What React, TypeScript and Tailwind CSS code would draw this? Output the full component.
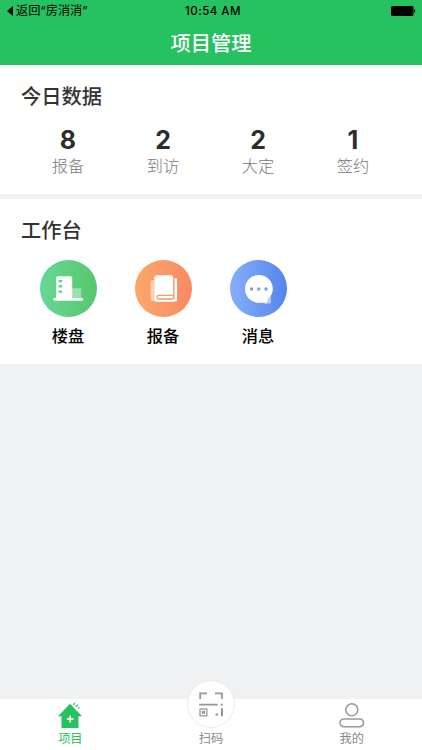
import type { ReactNode } from "react"

type Stat = {
  label: string
  value: number
}

type Tool = {
  label: string
  color: string
  icon: ReactNode
}

const stats: Stat[] = [
  { label: "报备", value: 8 },
  { label: "到访", value: 2 },
  { label: "大定", value: 2 },
  { label: "签约", value: 1 },
]

const BuildingIcon = () => (
  <svg viewBox="0 0 57 57" className="size-full">
    <rect x="32" y="28.2" width="9.2" height="10" rx="1.2" fill="#fff" fillOpacity="0.4" />
    <path d="M16.2 38V18q0-1.7 1.7-1.7h12.6q1.7 0 1.7 1.7v20z" fill="#fff" />
    <rect x="13.3" y="38" width="30" height="2.8" rx="1.4" fill="#fff" />
    <path d="M18.6 21.2h3.6M18.6 26.4h3.6M18.6 31.6h3.6" stroke="#5fcf83" strokeWidth="2.2" />
  </svg>
)

const BookIcon = () => (
  <svg viewBox="0 0 57 57" className="size-full">
    <path d="M15.7 22q0-1.8 1.8-1.8h2v21h-2q-1.8 0-1.8-1.8z" fill="#fff" fillOpacity="0.5" />
    <rect x="19.4" y="15.2" width="18.8" height="26.6" rx="2.6" fill="#fff" />
    <path
      d="M40.700 18.600v21.700H23.500q-3 0-3-2.700"
      fill="none"
      stroke="#fff"
      strokeWidth="2.6"
      strokeLinejoin="round"
    />
    <rect
      x="22"
      y="35.4"
      width="17"
      height="3.6"
      rx="1.8"
      fill="none"
      stroke="#fa9969"
      strokeWidth="1.3"
    />
    <path d="M38.700 18v17" stroke="#fa9969" strokeWidth="0.9" />
  </svg>
)

const MessageIcon = () => (
  <svg viewBox="0 0 57 57" className="size-full">
    <path d="M41 36v6.3q0 1.4-1.4 1.4H33z" fill="#fff" fillOpacity="0.5" />
    <path
      d="M28.9 15a13.9 13.9 0 0 1 13.9 13.9c0 4-1.6 7-4.300 9.300l-1.600 4.600h-8a13.900 13.900 0 0 1 0-27.800z"
      fill="#fff"
    />
    <g fill="#6f9af5">
      <circle cx="21.5" cy="29" r="1.7" />
      <circle cx="28.8" cy="29" r="1.7" />
      <circle cx="36" cy="29" r="1.7" />
    </g>
  </svg>
)

const tools: Tool[] = [
  { label: "楼盘", color: "from-[#65d896] to-[#58c66c]", icon: <BuildingIcon /> },
  { label: "报备", color: "from-[#faa869] to-[#fa8964]", icon: <BookIcon /> },
  { label: "消息", color: "from-[#86aef9] to-[#5585ed]", icon: <MessageIcon /> },
]

const HomeIcon = () => (
  <svg viewBox="0 0 28 28" className="size-7">
    <path d="M14 2.700L26 15.200h-3.500V27H5.500V15.200H2z" fill="#26c160" />
    <path d="M14.200 14.800v6.600M10.900 18.100h6.600" stroke="#fff" strokeWidth="1.6" />
    <path
      d="M17.800 3.400l.6-1M20.200 5.600l1.200-1.300M22.300 7l.8-.3"
      stroke="#26c160"
      strokeWidth="1.3"
      strokeLinecap="round"
    />
  </svg>
)

const ScanIcon = () => (
  <svg viewBox="0 0 26 26" className="size-[26px]" fill="none" stroke="#969696" strokeWidth="1.8">
    <path d="M2.2 8V2.3H9M17 2.3h7V8M1.200 13.600h18.500M22.800 13.600h2.200" />
    <rect x="2" y="18" width="6.800" height="6.800" strokeWidth="1.3" />
    <rect x="4.400" y="20.400" width="2" height="2" strokeWidth="1.2" />
    <path d="M24 17.300v7.900M17.500 23.500h2.600" strokeWidth="2" />
  </svg>
)

const UserIcon = () => (
  <svg viewBox="0 0 28 28" className="size-7" fill="none" stroke="#999" strokeWidth="1.6">
    <circle cx="13.8" cy="8.800" r="6" />
    <rect x="2" y="18" width="23.500" height="7.700" rx="3.850" />
  </svg>
)

const StatusBar = () => (
  <div className="grid h-[22px] grid-cols-[1fr_auto_1fr] items-center pl-[7px] pr-[6px] text-[12px] leading-none text-black">
    <div className="flex items-center gap-[2px]">
      <svg viewBox="0 0 7 10" className="h-[10px] w-[7px]">
        <path d="M6 0v10L0 5z" />
      </svg>
      <span className="font-['Inter','Noto_Sans_CJK_SC',sans-serif] text-[12.2px]">
        返回“房消消”
      </span>
    </div>
    <span className="pl-[3px] pt-[2px] font-['Inter'] text-[11.5px] font-medium tracking-[0.5px]">
      10:54 AM
    </span>
    <svg viewBox="0 0 25 10" className="h-[10px] w-[25px] justify-self-end">
      <rect width="22.5" height="10" rx="1.5" />
      <path d="M23.3 3.5q1.3 1.5 0 3z" stroke="#000" strokeWidth="0.6" />
    </svg>
  </div>
)

export default function App() {
  return (
    <div className="flex h-[750px] w-[422px] flex-col overflow-hidden bg-[#f0f1f3] font-['Noto_Sans_CJK_SC',sans-serif]">
      <header className="h-[65px] shrink-0 bg-[#26c160]">
        <StatusBar />
        <h1 className="text-center text-[20.25px] font-medium leading-[42px] text-white">
          项目管理
        </h1>
      </header>

      <main className="flex-1">
        <section className="h-[129px] bg-white pt-4">
          <h2 className="pl-[21px] text-[20.25px] font-medium leading-[30px] text-[#333]">
            今日数据
          </h2>
          <div className="grid grid-cols-[repeat(4,95px)] pl-[20.5px] pt-4 text-center">
            {stats.map(stat => (
              <div key={stat.label}>
                <p className="font-['Inter'] text-[25px] font-bold leading-[27px] text-[#2d2d2d]">
                  {stat.value}
                </p>
                <p className="-mt-px text-[16.2px] font-light leading-6 text-[#777]">
                  {stat.label}
                </p>
              </div>
            ))}
          </div>
        </section>

        <section className="mt-[5px] h-[165px] bg-white pt-4">
          <h2 className="pl-[21px] text-[20.25px] font-medium leading-[30px] text-[#333]">
            工作台
          </h2>
          <div className="grid grid-cols-[repeat(4,95px)] pl-[20.5px] pt-[15px]">
            {tools.map(tool => (
              <div key={tool.label} className="flex flex-col items-center">
                <div className={`size-[57px] rounded-full bg-linear-to-r ${tool.color}`}>
                  {tool.icon}
                </div>
                <p className="mt-1.5 text-[16.2px] font-medium leading-6 text-black">
                  {tool.label}
                </p>
              </div>
            ))}
          </div>
        </section>
      </main>

      <nav className="grid h-[51px] shrink-0 grid-cols-3 bg-white text-[12.2px] leading-[18px] text-[#888]">
        <div className="flex flex-col items-center pt-[2px] text-[#26c160]">
          <HomeIcon />
          <span>项目</span>
        </div>
        <div className="flex flex-col items-center">
          <div className="-mt-[19px] flex size-12 items-center justify-center rounded-full border border-[#ececec] bg-white">
            <ScanIcon />
          </div>
          <span className="mt-px">扫码</span>
        </div>
        <div className="flex flex-col items-center pt-[2px]">
          <UserIcon />
          <span>我的</span>
        </div>
      </nav>
    </div>
  )
}
